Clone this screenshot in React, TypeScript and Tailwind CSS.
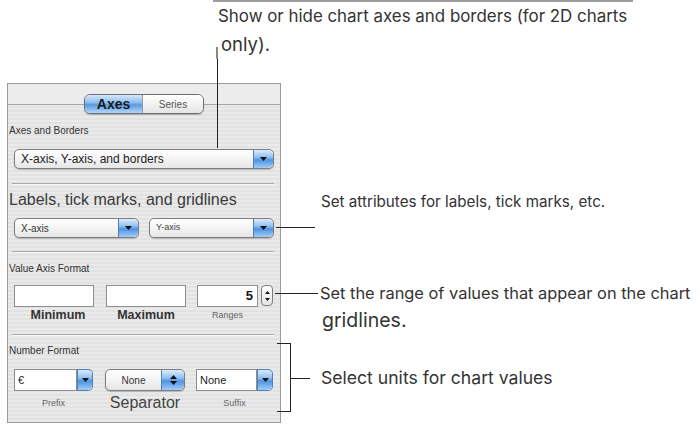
const panelFont = { fontFamily: '"Liberation Sans", Arial, sans-serif' };

const Arrow = ({ up }: { up?: boolean }) => (
  <svg width="7" height="4" viewBox="0 0 7 4">
    <path d={up ? "M0 4 L3.5 0 L7 4 Z" : "M0 0 L7 0 L3.5 4 Z"} fill="#111" />
  </svg>
);

const BlueBtn = ({ w, double }: { w: string; double?: boolean }) => (
  <div
    className={`${w} h-full flex flex-col items-center justify-center gap-[2px] rounded-r-[5px] border-l border-[#4f7fb3] bg-[linear-gradient(180deg,#dcebfb_0%,#8fc0f2_40%,#4f93e0_55%,#9fcdf9_100%)]`}
  >
    {double && <Arrow up />}
    <Arrow />
  </div>
);

const Popup = ({ w, text, textCls }: { w: string; text: string; textCls: string }) => (
  <div
    className={`${w} h-[20px] flex rounded-[5px] border border-[#7d7d7d] bg-[linear-gradient(180deg,#ffffff_0%,#f4f4f4_50%,#e6e6e6_100%)] shadow-[0_1px_1px_rgba(0,0,0,0.2)] overflow-hidden`}
  >
    <div className={`flex-1 flex items-center pl-[6px] ${textCls}`}>{text}</div>
    <BlueBtn w="w-[20px]" />
  </div>
);

const Combo = ({ text }: { text: string }) => (
  <div className="flex h-[22px] w-full">
    <div className="flex-1 flex items-center pl-[3px] bg-white border border-[#8e8e8e] text-[11px] text-[#222]">
      {text}
    </div>
    <div className="w-[16px] h-full rounded-r-[5px] border border-l-0 border-[#4f7fb3] overflow-hidden">
      <BlueBtn w="w-full" />
    </div>
  </div>
);

const Rule = () => <div className="ml-[4px] w-[262px] h-[2px] border-t border-[#a9a9a9] border-b border-b-[#f7f7f7]" />;

export default function App() {
  return (
    <div className="relative w-[700px] h-[425px] bg-white overflow-hidden text-[#333]">
      {/* top annotation */}
      <div className="h-[83px]">
        <div className="ml-[213px] w-[420px] h-[2px] bg-[#9d9d9d]" />
        <div className="pl-[218px] pt-[4px] text-[16.9px] leading-[20px] whitespace-nowrap" style={{ fontFamily: "Inter, sans-serif" }}>
          Show or hide chart axes and borders (for 2D charts
        </div>
        <div className="pl-[221px] pt-[7px] text-[18.5px] leading-[22px]" style={{ fontFamily: "Inter, sans-serif" }}>
          only).
        </div>
      </div>

      <div className="flex">
        {/* inspector panel */}
        <div
          className="ml-[7px] w-[274px] h-[340px] border border-[#9b9b9b] bg-[repeating-linear-gradient(180deg,#eaeaea_0px,#eaeaea_2px,#e2e2e2_2px,#e2e2e2_4px)] text-[#333]"
          style={panelFont}
        >
          <div className="h-[20px] flex justify-center pt-[10px] bg-[#ececec]">
            <div className="relative z-10 h-[20px] flex rounded-[6px] border border-[#6f6f6f] overflow-hidden shadow-[0_1px_1px_rgba(0,0,0,0.25)]">
              <div className="w-[57px] flex items-center justify-center text-[14px] font-bold text-[#1a1a1a] bg-[linear-gradient(180deg,#d3e6fa_0%,#94c1ef_40%,#5a9ae0_55%,#b3d7fb_100%)]">
                Axes
              </div>
              <div className="w-[61px] flex items-center justify-center text-[10px] text-[#555] bg-[linear-gradient(180deg,#ffffff_0%,#f2f2f2_50%,#e4e4e4_100%)] border-l border-[#9a9a9a]">
                Series
              </div>
            </div>
          </div>
          <div className="border-t border-[#a5a5a5]">
            <div className="mt-[19px] h-[14px] leading-[14px] pl-[1px] text-[10px]">Axes and Borders</div>
            <div className="mt-[11px] ml-[6px]">
              <Popup w="w-[260px]" text="X-axis, Y-axis, and borders" textCls="text-[12px] text-[#222]" />
            </div>
            <div className="mt-[14px]"><Rule /></div>
            <div className="mt-[6px] h-[18px] leading-[18px] pl-[1px] text-[16px] text-[#3a3a3a]">
              Labels, tick marks, and gridlines
            </div>
            <div className="mt-[9px] ml-[6px] flex gap-[10px]">
              <Popup w="w-[125px]" text="X-axis" textCls="text-[10px] text-[#333]" />
              <Popup w="w-[125px]" text="Y-axis" textCls="text-[9px] text-[#444]" />
            </div>
            <div className="mt-[13px]"><Rule /></div>
            <div className="mt-[9px] h-[14px] leading-[14px] pl-[1px] text-[10px]">Value Axis Format</div>
            <div className="mt-[9px] ml-[6px] flex h-[22px]">
              <div className="w-[80px] bg-white border border-[#8e8e8e]" />
              <div className="ml-[12px] w-[80px] bg-white border border-[#8e8e8e]" />
              <div className="ml-[11px] w-[61px] bg-white border border-[#8e8e8e] flex items-center justify-end pr-[4px] text-[13px] font-bold text-[#111]">
                5
              </div>
              <div className="ml-[3px] w-[12px] h-[21px] rounded-[4px] border border-[#7d7d7d] bg-[linear-gradient(180deg,#ffffff,#e3e3e3)] flex flex-col items-center justify-center gap-[4px]">
                <svg width="5" height="3" viewBox="0 0 5 3"><path d="M0 3 L2.5 0 L5 3Z" fill="#111" /></svg>
                <svg width="5" height="3" viewBox="0 0 5 3"><path d="M0 0 L5 0 L2.5 3Z" fill="#111" /></svg>
              </div>
            </div>
            <div className="mt-[1px] ml-[6px] flex h-[14px] leading-[14px]">
              <div className="w-[80px] text-center text-[12.5px] font-bold text-[#333] pl-[8px]">Minimum</div>
              <div className="ml-[12px] w-[80px] text-center text-[12.5px] font-bold text-[#333]">Maximum</div>
              <div className="ml-[11px] w-[61px] text-center text-[9px] text-[#666]">Ranges</div>
            </div>
            <div className="mt-[12px]"><Rule /></div>
            <div className="mt-[8px] h-[14px] leading-[14px] pl-[1px] text-[10px]">Number Format</div>
            <div className="mt-[11px] ml-[6px] flex h-[22px] items-center">
              <div className="w-[79px]">
                <Combo text="€" />
              </div>
              <div className="ml-[12px] w-[80px] h-[22px] flex rounded-[5px] border border-[#7d7d7d] bg-[linear-gradient(180deg,#ffffff_0%,#f4f4f4_50%,#e3e3e3_100%)] overflow-hidden shadow-[0_1px_1px_rgba(0,0,0,0.2)]">
                <div className="flex-1 flex items-center justify-center text-[10px] text-[#333]">None</div>
                <BlueBtn w="w-[23px]" double />
              </div>
              <div className="ml-[11px] w-[77px]">
                <Combo text="None" />
              </div>
            </div>
            <div className="mt-[4px] ml-[6px] flex h-[16px] leading-[16px] items-center">
              <div className="w-[79px] text-center text-[9px] text-[#666]">Prefix</div>
              <div className="ml-[12px] w-[80px] text-center text-[16px] text-[#444]">Separator</div>
              <div className="ml-[11px] w-[77px] text-center text-[9px] text-[#666]">Suffix</div>
            </div>
          </div>
        </div>

        {/* right annotations */}
        <div className="flex-1 flex flex-col pl-[40px] whitespace-nowrap" style={{ fontFamily: "Inter, sans-serif" }}>
          <div className="mt-[109px] h-[20px] leading-[20px] text-[15.2px]">Set attributes for labels, tick marks, etc.</div>
          <div className="mt-[71px] h-[20px] leading-[20px] text-[16.4px] -ml-[1px]">
            Set the range of values that appear on the chart
          </div>
          <div className="mt-[6px] h-[22px] leading-[22px] text-[19.5px] ml-[1px]">gridlines.</div>
          <div className="mt-[37px] h-[20px] leading-[20px] text-[17.6px]">Select units for chart values</div>
        </div>
      </div>

      {/* callout leaders */}
      <div className="absolute left-[217px] top-[47px] w-[1px] h-[101px] bg-[#222]" />
      <div className="absolute left-[216px] top-[47px] w-[2px] h-[12px] bg-[#888]" />
      <div className="absolute left-[276px] top-[227px] w-[39px] h-[1px] bg-[#222]" />
      <div className="absolute left-[275px] top-[293px] w-[43px] h-[1px] bg-[#222]" />
      <div className="absolute left-[277px] top-[343px] w-[14px] h-[69px] border border-l-0 border-[#222]" />
      <div className="absolute left-[290px] top-[378px] w-[20px] h-[1px] bg-[#222]" />
    </div>
  );
}
